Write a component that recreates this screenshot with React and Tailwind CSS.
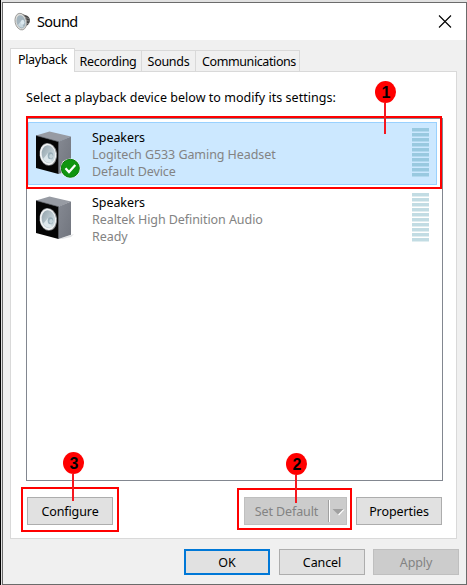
import React from "react";

function SoundIcon() {
  return (
    <svg width="18" height="20" viewBox="0 0 18 20" className="shrink-0">
      <path d="M6 1 L11 3 Q16 4 16 9 Q15 13 12 14 L8 18Z" fill="#454545" />
      <path d="M11 5.5 L15 6.5 M12 8.5 L16 9 M12 11.5 L15 11.5" stroke="#8c8c8c" strokeWidth=".8" />
      <ellipse cx="6.8" cy="9.6" rx="5.7" ry="8.4" fill="#dededb" stroke="#9a9a98" strokeWidth=".9" transform="rotate(-12 6.8 9.6)" />
      <ellipse cx="7" cy="9.8" rx="4.4" ry="6.7" fill="#a3b4be" transform="rotate(-12 7 9.8)" />
      <path d="M4 13 L7 9 L9.5 15 Q6.5 16.5 4 13Z" fill="#c9d8df" />
      <ellipse cx="8.6" cy="10.2" rx="1.8" ry="2.5" fill="#dbe9ef" />
    </svg>
  );
}

function SpeakerIcon({ checked }) {
  return (
    <svg width="48" height="50" viewBox="0 0 48 50" className="shrink-0">
      <defs>
        <linearGradient id="side" x1="0" y1="0" x2="1" y2="1">
          <stop offset="0" stopColor="#858992" />
          <stop offset="1" stopColor="#71757e" />
        </linearGradient>
        <linearGradient id="cone" x1="0" y1="0" x2="1" y2="1">
          <stop offset="0" stopColor="#8f9fa8" />
          <stop offset="1" stopColor="#dce9ee" />
        </linearGradient>
      </defs>
      <path d="M24 43 L39 38 L36 41 L27 43Z" fill="#d5d7da" opacity=".7" />
      <path d="M1 4.5 L14.5 .5 L36 5.5 L23.5 11Z" fill="#979ba3" />
      <path d="M23.3 10.7 L36 5.5 V38.7 L23.3 43Z" fill="url(#side)" />
      <path d="M1 4.5 L23.5 10.7 V43 L1 37Z" fill="#050505" />
      <path d="M1 4.5 L23.5 10.7 V43" fill="none" stroke="#555960" strokeWidth=".6" />
      <ellipse cx="13.3" cy="23.3" rx="8.8" ry="11.4" fill="#85898c" transform="rotate(-8 13.3 23.3)" />
      <ellipse cx="13" cy="23.3" rx="8.1" ry="10.7" fill="#f2f4f5" transform="rotate(-8 13 23.3)" />
      <ellipse cx="13.4" cy="23.3" rx="6.7" ry="9.1" fill="url(#cone)" transform="rotate(-8 13.4 23.3)" />
      <path d="M8 28 L13 22 L17 31 Q12 33 8 28Z" fill="#e6eff2" opacity=".8" />
      <ellipse cx="15.5" cy="24.8" rx="2.8" ry="3.5" fill="#98adb8" />
      <ellipse cx="16.1" cy="25.3" rx="1.8" ry="2.4" fill="#c3d3da" />
      {checked && (
        <g>
          <circle cx="35.3" cy="37.3" r="9.9" fill="#fff" />
          <circle cx="35.3" cy="37.3" r="9" fill="#109510" stroke="#087d08" />
          <path d="M30.5 37.2 L34 41 L40.3 34" fill="none" stroke="#fff" strokeWidth="2.2" />
        </g>
      )}
    </svg>
  );
}

function Meter({ bar, edge }) {
  return (
    <div className="flex w-[17px] shrink-0 flex-col gap-px">
      {Array.from({ length: 10 }, (_, i) => (
        <div key={i} className={`h-1 border-b ${bar} ${edge}`} />
      ))}
    </div>
  );
}

function Device({ detail, status, selected }) {
  return (
    <div
      className={`flex h-[63px] w-[409px] border ${
        selected ? "border-[#99d1ff] bg-[#cce8ff]" : "border-transparent"
      }`}
    >
      <div className="w-[63px] pl-[6px] pt-[8px]">
        <SpeakerIcon checked={selected} />
      </div>
      <div className="flex-1 whitespace-nowrap pt-[6px] leading-[17px] tracking-[-0.07px] text-[#838383]">
        <p className="text-black">Speakers</p>
        <p>{detail}</p>
        <p>{status}</p>
      </div>
      <div className="pr-[7px] pt-[5px]">
        {selected ? (
          <Meter bar="bg-[#99c9e0]" edge="border-[#b3d9ef]" />
        ) : (
          <Meter bar="bg-[#c2dce3]" edge="border-[#e1eef1]" />
        )}
      </div>
    </div>
  );
}

function Tab({ children, className }) {
  return (
    <div
      className={`flex h-[21px] items-center justify-center border-r border-t border-[#d9d9d9] bg-[#f0f0f0] pt-[3px] ${className}`}
    >
      {children}
    </div>
  );
}

function Button({ children, className }) {
  return (
    <div className={`flex w-[86px] shrink-0 items-center justify-center whitespace-nowrap tracking-[-0.1px] ${className}`}>
      {children}
    </div>
  );
}

function Marker({ n, className, stem }) {
  return (
    <div className={`absolute flex w-[21px] flex-col items-center ${className}`}>
      <div className="flex h-[22px] w-[21px] shrink-0 items-center justify-center rounded-[50%] bg-[#ff0000] pl-px pt-[2px] font-['Liberation_Sans',sans-serif] text-[16px] font-bold leading-none tracking-normal text-black">
        {n}
      </div>
      <div className={`-ml-px w-[2px] bg-[#f51820] ${stem}`} />
    </div>
  );
}

export default function App() {
  return (
    <div className="relative h-[585px] w-[467px] overflow-hidden border-l border-black bg-[#e1e1e1] pl-px pt-[2px] font-['Noto_Sans',sans-serif] text-[12.5px] text-black">
      <div className="flex h-[583px] flex-col border border-[#6b6b6b] bg-[#f0f0f0]">
        <header className="flex h-[37px] shrink-0 items-center justify-between bg-white pl-[11px] pr-[14px]">
          <div className="flex items-center gap-[5px]">
            <SoundIcon />
            <h1 className="pb-[2px] text-[14.5px] leading-5 tracking-[-0.6px]">Sound</h1>
          </div>
          <svg width="14" height="14" viewBox="0 0 14 14">
            <path d="M1 .5 L13 12.5 M13 .5 L1 12.5" stroke="#000" strokeWidth="1.1" />
          </svg>
        </header>

        <div className="px-[7px] pt-[8px]">
          <nav className="flex h-[23px] items-end tracking-[-0.3px]">
            <div className="relative z-10 -mb-px flex h-[24px] w-[65px] items-center justify-center border border-b-0 border-[#d9d9d9] bg-white">
              Playback
            </div>
            <Tab className="w-[67px]">Recording</Tab>
            <Tab className="w-[54px]">Sounds</Tab>
            <Tab className="w-[104px] pl-[3px] tracking-[-0.4px]">Communications</Tab>
          </nav>
          <main className="h-[468px] w-[447px] border border-[#d9d9d9] bg-white pl-[15px] pr-[13px] pt-[17px]">
            <p className="h-[29px] whitespace-nowrap leading-[18px] tracking-[0.03px]">
              Select a playback device below to modify its settings:
            </p>
            <div className="flex h-[363px] w-[417px] flex-col gap-[2px] border border-[#828790] pl-px pt-[3px]">
              <Device selected detail="Logitech G533 Gaming Headset" status="Default Device" />
              <Device detail="Realtek High Definition Audio" status="Ready" />
            </div>
            <div className="flex pl-px pt-[16px]">
              <Button className="h-[28px] border border-[#adadad] bg-[#e1e1e1] pt-[2px]">Configure</Button>
              <div className="ml-[131px] flex h-[28px] w-[103px] shrink-0 items-center border border-[#bfbfbf] bg-[#cccccc] text-[#838383]">
                <span className="w-[83px] whitespace-nowrap pt-[2px] text-center tracking-[-0.1px]">Set Default</span>
                <div className="h-[22px] w-[2px] border-l border-r border-l-[#a0a0a0] border-r-white" />
                <svg width="14" height="10" viewBox="0 0 14 10" className="ml-px mt-[2px] shrink-0">
                  <path d="M3 2.5 H13.5 L8 8.5Z" fill="#fff" />
                  <path d="M1.5 2 H12.5 L7 7.5Z" fill="#a0a0a0" />
                </svg>
              </div>
              <Button className="ml-[9px] h-[28px] border border-[#adadad] bg-[#e1e1e1] pt-[2px]">Properties</Button>
            </div>
          </main>
        </div>

        <footer className="flex justify-end pr-[7px] pt-[10px]">
          <Button className="h-[26px] border-2 border-[#0078d7] bg-[#e1e1e1] pt-[2px]">OK</Button>
          <Button className="ml-[9px] h-[26px] border border-[#adadad] bg-[#e1e1e1] pt-[2px]">Cancel</Button>
          <Button className="ml-[8px] h-[26px] border border-[#bfbfbf] bg-[#cccccc] pt-[2px] text-[#838383]">
            Apply
          </Button>
        </footer>
      </div>

      <div className="absolute left-[25px] top-[116px] h-[73px] w-[416px] border-2 border-[#ff0000]" />
      <div className="absolute left-[20px] top-[487px] h-[45px] w-[98px] border-2 border-[#ff0000]" />
      <div className="absolute left-[236px] top-[488px] h-[42px] w-[115px] border-2 border-[#ff0000]" />
      <Marker n="1" className="left-[374px] top-[81px]" stem="h-[31px]" />
      <Marker n="3" className="left-[62px] top-[452px]" stem="h-[27px]" />
      <Marker n="2" className="left-[285px] top-[453px]" stem="h-[28px]" />
    </div>
  );
}
